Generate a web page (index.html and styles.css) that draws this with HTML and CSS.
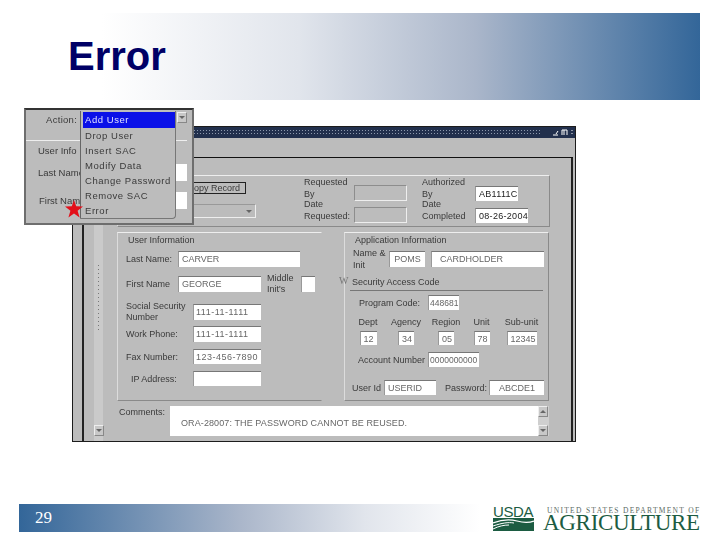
FILE: index.html
```html
<!DOCTYPE html>
<html>
<head>
<meta charset="utf-8">
<title>Error</title>
<link rel="stylesheet" href="styles.css">
</head>
<body>
<div class="slide">
	<div class="banner"><h1>Error</h1></div>

	<div class="shot">
		<div class="titlebar">
			<span class="dither"></span>
			<svg class="winbtns" width="22" height="9" viewBox="0 0 22 9"><path d="M1 7h5M4 6l2-3M10 7V2h5v5M12 2v5M20 2v1M20 5v1" fill="none" stroke="#fff" stroke-width="1"/></svg>
		</div>
		<div class="toolbar"></div>
		<div class="body">
			<div class="strip">
				<div class="dots"></div>
				<div class="arrowbox"><span class="tri"></span></div>
			</div>
			<div class="main">
				<div class="panel toppanel">
					<div class="copycol">
						<div class="btn">Copy Record</div>
						<div class="select"><span class="tri"></span></div>
					</div>
					<div class="reqcol">
						<div class="reqrow">
							<div class="lbl2">Requested<br>By</div>
							<div class="field greyed f53"></div>
						</div>
						<div class="reqrow">
							<div class="lbl2">Date<br>Requested:</div>
							<div class="field greyed f53"></div>
						</div>
					</div>
					<div class="authcol">
						<div class="reqrow">
							<div class="lbl2">Authorized<br>By</div>
							<div class="field val dark f43">AB1111C</div>
						</div>
						<div class="reqrow">
							<div class="lbl2">Date<br>Completed</div>
							<div class="field val dark f53">08-26-2004</div>
						</div>
					</div>
				</div>

				<div class="panels">
					<div class="panel userpanel">
						<div class="ptitle">User Information</div>
						<div class="row short"><label>Last Name:</label><div class="field val f122">CARVER</div></div>
						<div class="row short mt9">
							<label>First Name</label><div class="field val f83">GEORGE</div>
							<div class="lbl2 middle">Middle<br>Init's</div><div class="field f14"></div>
						</div>
						<div class="row mt12"><div class="lbl2">Social Security<br>Number</div><div class="field val num f68">111-11-1111</div></div>
						<div class="row mt6"><label>Work Phone:</label><div class="field val num f68">111-11-1111</div></div>
						<div class="row mt7 h15"><label>Fax Number:</label><div class="field val num f68">123-456-7890</div></div>
						<div class="row mt7 h15"><label class="ip">IP Address:</label><div class="field f68"></div></div>
					</div>

					<div class="panel apppanel">
						<div class="ptitle">Application Information</div>
						<div class="row namerow">
							<div class="lbl2 namelbl">Name &amp;<br>Init</div>
							<div class="field val f36">POMS</div>
							<div class="field val f113">CARDHOLDER</div>
						</div>
						<div class="sectitle"><span class="wmark">W</span>Security Access Code</div>
						<div class="row progrow"><label>Program Code:</label><div class="field val tight f31">448681</div></div>
						<div class="codes">
							<div>Dept</div><div>Agency</div><div>Region</div><div>Unit</div><div>Sub-unit</div>
							<div class="field val f17">12</div><div class="field val f16">34</div><div class="field val f16">05</div><div class="field val f16">78</div><div class="field val f30">12345</div>
						</div>
						<div class="row acctrow"><label>Account Number</label><div class="field val tight f51">0000000000</div></div>
						<div class="row loginrow">
							<label class="uid">User Id</label><div class="field val f52">USERID</div>
							<label class="pwd">Password:</label><div class="field val f55">ABCDE1</div>
						</div>
					</div>
				</div>

				<div class="commentrow">
					<label>Comments:</label>
					<div class="commentbox">ORA-28007: THE PASSWORD CANNOT BE REUSED.</div>
					<div class="vscroll">
						<div class="arrowbox up"><span class="tri"></span></div>
						<div class="arrowbox"><span class="tri"></span></div>
					</div>
				</div>
			</div>
		</div>
	</div>

	<div class="popup">
		<div class="poprow actionrow">
			<span class="poplbl actionlbl">Action:</span>
			<div class="arrowbox"><span class="tri"></span></div>
		</div>
		<div class="poprow inforow"><span class="poplbl">User Info</span></div>
		<div class="poprow namerow1"><span class="poplbl">Last Name</span><div class="popfield"></div></div>
		<div class="poprow namerow2"><span class="poplbl">First Name</span><div class="popfield"></div></div>
		<ul class="menu">
			<li class="sel">Add User</li>
			<li>Drop User</li>
			<li>Insert SAC</li>
			<li>Modify Data</li>
			<li>Change Password</li>
			<li>Remove SAC</li>
			<li>Error</li>
		</ul>
	</div>
	<svg class="star" width="18" height="18" viewBox="0 0 18 18"><polygon points="9,0 11.2,6.3 18,6.5 12.6,10.7 14.6,17.5 9,13.4 3.4,17.5 5.4,10.7 0,6.5 6.8,6.3" fill="#e3101a"/></svg>

	<div class="footer">
		<div class="bar">29</div>
		<div class="logo">
			<div class="usda">
				<div class="usdatext">USDA</div>
				<svg class="fields" width="41" height="13" viewBox="0 0 41 13">
					<rect width="41" height="13" fill="#1c5c42"/>
					<path d="M0 5C10 1 17 1 24 3S36 5 41 3" fill="none" stroke="#fff" stroke-width="1.2"/>
					<path d="M0 8C9 5 15 4 21 5" fill="none" stroke="#fff" stroke-width="1"/>
					<path d="M0 11C6 8 11 7 16 7" fill="none" stroke="#fff" stroke-width="1"/>
				</svg>
			</div>
			<div class="dept">
				<div class="deptline">UNITED STATES DEPARTMENT OF</div>
				<div class="agri">AGRICULTURE</div>
			</div>
		</div>
	</div>
</div>
</body>
</html>
```

FILE: styles.css
```css
html,body{margin:0;padding:0;background:#fff;}
.slide{position:relative;width:720px;height:540px;overflow:hidden;display:flex;flex-direction:column;font-family:"Liberation Sans",Arial,sans-serif;}

/* header + footer of the slide */
.banner{height:87px;margin:13px 20px 0 20px;background:linear-gradient(90deg,#fff 12%,#e1e5ec 41%,#aab6ca 67%,#336699 100%);flex:none;}
.banner h1{margin:0;padding:20px 0 0 48px;font-size:40px;line-height:46px;font-weight:bold;color:#000066;}
.footer{margin-top:auto;margin-bottom:8px;padding-left:19px;display:flex;align-items:center;}
.bar{width:461px;height:28px;box-sizing:border-box;padding-left:16px;background:linear-gradient(90deg,#336699,#aab6ca 48%,#e1e5ec 75%,#fff);color:#fff;font:17px/28px "Liberation Serif",serif;}
.logo{display:flex;margin-left:13px;color:#1c5c42;}
.usda{width:41px;}
.usdatext{font-size:15px;line-height:12px;letter-spacing:-.4px;height:12px;}
.fields{display:block;}
.dept{margin-left:9px;}
.deptline{font:7.5px/9px "Liberation Serif",serif;letter-spacing:1.3px;color:#5b6b64;padding-left:4px;white-space:nowrap;}
.agri{font:23px/16px "Liberation Serif",serif;white-space:nowrap;letter-spacing:-.3px;}

/* the form window */
.shot{position:absolute;left:72px;top:126px;width:504px;height:316px;box-sizing:border-box;border:1.5px solid #1c1c1c;border-right-width:1px;background:#bcbcbc;display:flex;flex-direction:column;font-size:9px;color:#3a3a3a;filter:blur(.35px);}
.titlebar{height:11px;background:#22304d;display:flex;align-items:center;flex:none;}
.dither{flex:1;height:7px;margin-right:10px;background-image:radial-gradient(#8d99ad 35%,transparent 45%);background-size:3px 3px;}
.winbtns{margin-right:1px;}
.toolbar{height:20px;border-bottom:1.5px solid #111;margin:0 2px 0 9px;border-left:2px solid #222;flex:none;box-sizing:border-box;}
.body{flex:1;display:flex;margin:0 2px 0 9px;border-left:2px solid #222;border-right:2px solid #222;min-height:0;}
.strip{width:9px;margin-left:10px;background:#cacaca;display:flex;flex-direction:column;justify-content:space-between;padding:107px 0 5px;box-sizing:border-box;align-items:center;}
.dots{height:65px;width:1px;background:repeating-linear-gradient(#777 0 1px,transparent 1px 4px);}
.main{flex:1;padding:17px 0 0 14px;display:flex;flex-direction:column;}

.arrowbox{width:10px;height:11px;background:#c8c8c8;border:1px solid #888;border-left-color:#eee;border-top-color:#eee;box-sizing:border-box;display:flex;align-items:center;justify-content:center;}
.tri{width:0;height:0;border:3px solid transparent;border-top:3px solid #666;border-bottom:0;}
.arrowbox.up .tri{border-top:0;border-bottom:3px solid #666;}

.panel{box-sizing:border-box;border:1px solid #8a8a8a;border-top-color:#eee;border-left-color:#dcdcdc;}
.toppanel{width:433px;height:52px;padding:6px 0 0 47px;display:flex;flex:none;}
.copycol{width:139px;}
.btn{width:81px;height:12px;line-height:11px;text-align:right;padding-right:5px;box-sizing:border-box;border:1px solid #222;}
.select{width:91px;height:14px;margin-top:10px;box-sizing:border-box;border:1px solid #999;border-right-color:#eee;border-bottom-color:#eee;display:flex;justify-content:flex-end;align-items:center;padding-right:3px;}
.reqcol{width:118px;}
.reqrow{display:flex;align-items:center;height:22px;}
.reqrow .lbl2{align-self:flex-start;margin-top:-5px;}
.reqcol .lbl2{width:50px;}
.authcol .lbl2{width:53px;}
.lbl2{line-height:11.5px;white-space:nowrap;}

.field{box-sizing:border-box;height:15px;background:#fff;border-top:1px solid #777;border-left:1px solid #999;flex:none;white-space:nowrap;overflow:hidden;}
.val{color:#666;line-height:15px;padding-left:3px;}
.num{letter-spacing:.5px;padding-left:2px;}
.dark{color:#222;background:#fff;letter-spacing:.3px;}
.tight{font-size:8.5px;padding-left:1px;}
.greyed{background:#bcbcbc;border:1px solid #8d8d8d;border-right-color:#eee;border-bottom-color:#eee;height:16px;}
.f14{width:14px;}.f16{width:16px;}.f17{width:17px;}.f30{width:30px;}.f31{width:31px;}.f36{width:36px;}.f43{width:43px;}
.f51{width:51px;}.f52{width:52px;}.f53{width:53px;}.f55{width:55px;}.f68{width:68px;}.f83{width:83px;}.f113{width:113px;}.f122{width:122px;}

.panels{display:flex;gap:22px;margin-top:5px;flex:none;}
.userpanel,.apppanel{width:205px;height:169px;}
.userpanel{border-right-color:transparent;}
.ptitle{height:18px;line-height:15px;padding-left:10px;}
.row{display:flex;align-items:center;height:16px;padding-left:8px;white-space:nowrap;}
.row label,.row .lbl2{width:67px;flex:none;}
.row.short label{width:52px;}
.row .middle{width:34px;margin-left:6px;}
.row label.ip{padding-left:5px;box-sizing:border-box;}
.h15{height:15px;}
.mt6{margin-top:6px;}.mt7{margin-top:7px;}.mt9{margin-top:9px;}.mt12{margin-top:12px;}
.userpanel .row .field{height:100%;}

.namerow{height:16px;}
.row .namelbl{width:36px;line-height:12px;}
.namerow .field{height:16px;margin-right:6px;text-align:center;padding-left:0;}
.namerow .f113{text-align:left;padding-left:8px;}
.sectitle{position:relative;margin:10px 5px 0 5px;padding:0 0 3px 2px;height:14px;box-sizing:border-box;line-height:11px;border-bottom:1px solid #777;}
.wmark{position:absolute;left:-11px;top:-2px;font:10px "Liberation Serif",serif;color:#777;}
.progrow{margin-top:4px;padding-left:14px;height:15px;}
.progrow label{width:69px;}
.codes{display:grid;grid-template-columns:36px 40px 40px 31px 49px;grid-template-rows:14px 14px;row-gap:2px;justify-items:center;align-items:center;padding-left:5px;margin-top:5px;}
.codes .field{height:14px;padding-left:3px;line-height:15px;}
.acctrow{margin-top:7px;padding-left:13px;height:15px;}
.acctrow label{width:70px;}
.loginrow{margin-top:13px;padding-left:7px;height:15px;}
.row label.uid{width:32px;}
.row label.pwd{width:44px;margin-left:9px;text-align:left;}
.loginrow .f55{text-align:center;padding-left:0;}

.commentrow{display:flex;margin-top:5px;height:30px;}
.commentrow label{width:53px;padding:1px 0 0 2px;box-sizing:border-box;}
.commentbox{width:368px;background:#fff;color:#666;letter-spacing:.1px;padding:12px 0 0 11px;box-sizing:border-box;line-height:11px;white-space:nowrap;}
.vscroll{width:11px;display:flex;flex-direction:column;justify-content:space-between;background:#cfcfcf;}

/* dropdown popup on top of the window */
.popup{position:absolute;left:24px;top:108px;width:170px;height:117px;box-sizing:border-box;border:2px solid #6e6e6e;border-top-color:#333;background:#bcbcbc;font-size:9.5px;color:#3a3a3a;padding-right:5px;filter:blur(.35px);}
.poprow{position:relative;display:flex;align-items:center;justify-content:space-between;}
.actionrow{height:31px;align-items:flex-start;padding-top:2px;box-sizing:border-box;border-bottom:1px solid #eee;}
.actionlbl{padding:2px 0 0 20px;letter-spacing:.3px;}
.inforow{height:16px;padding-left:12px;margin-top:1px;}
.namerow1{height:17px;padding-left:12px;margin-top:6px;}
.namerow2{height:17px;padding-left:13px;margin-top:11px;}
.poprow .poplbl{white-space:nowrap;}
.popfield{width:11px;height:100%;background:#fff;}
.menu{position:absolute;left:54px;top:1px;width:96px;height:108px;margin:0;padding:1px 0 0 2px;box-sizing:border-box;list-style:none;background:#bcbcbc;border:1px solid #777;border-top:0;border-left-color:#666;border-radius:0 0 4px 0;letter-spacing:.55px;}
.menu li{height:15.1px;line-height:15px;padding-left:2px;white-space:nowrap;}
.menu li.sel{background:#0a10e8;color:#dfe0ff;height:16px;line-height:16px;}
.star{position:absolute;left:65px;top:200px;}
```
